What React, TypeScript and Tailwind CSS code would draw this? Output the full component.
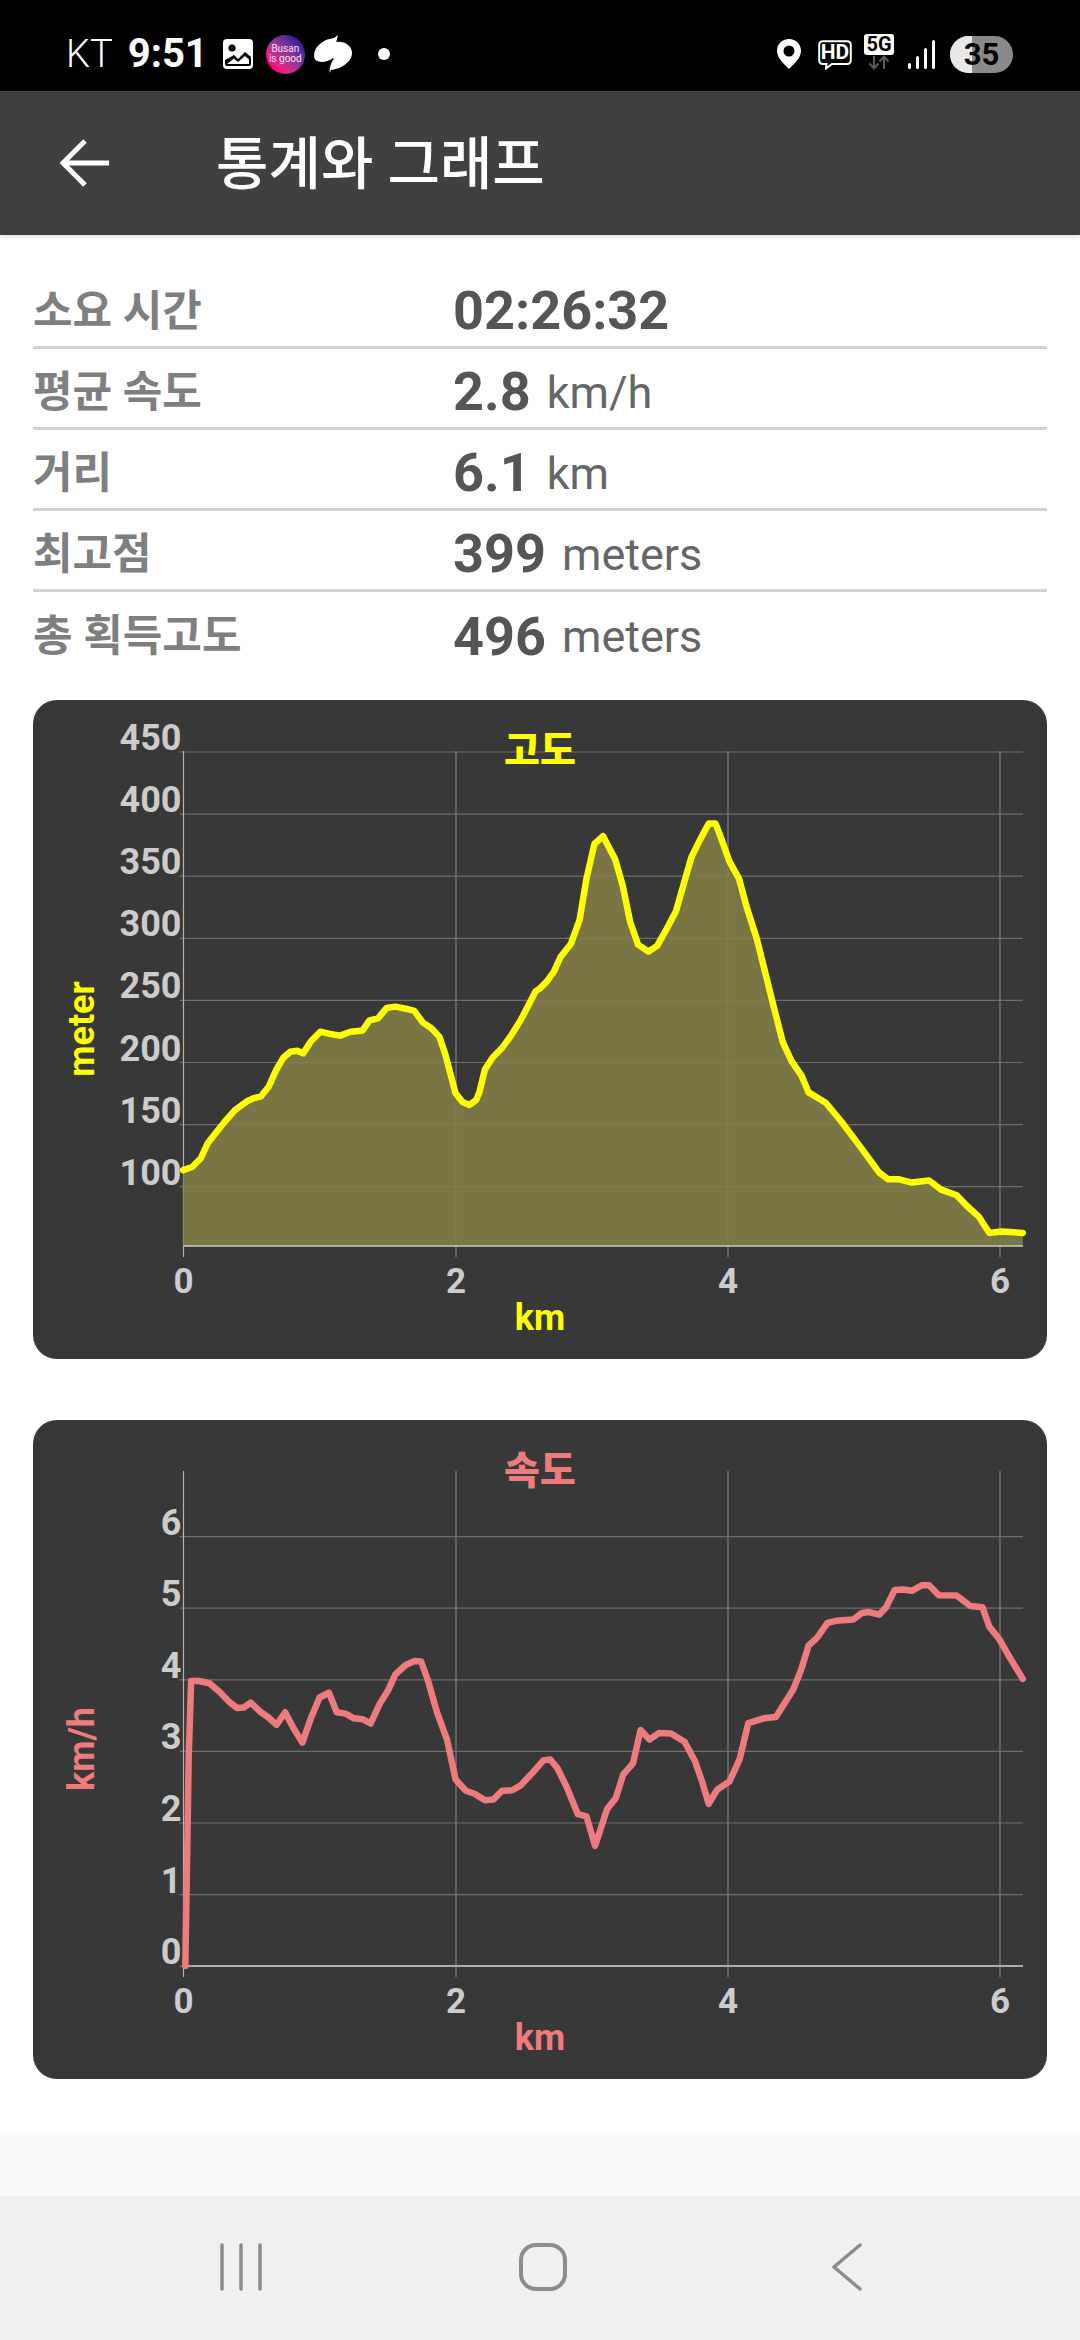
import React from "react";

// points read off the reference, in crop coordinates, split at the middle of the page
const altLeft = [[474,1107],[500,1100],[525,1080],[545,1045],[570,1020],[595,995],[625,968],[660,948],[680,941],[700,937],[722,915],[745,875],[765,848],[785,834],[805,832],[822,838],[845,810],[872,788],[900,793],[930,797],[960,788],[995,785],[1015,762],[1040,757],[1065,733],[1090,730],[1120,735],[1145,740],[1170,767],[1195,780],[1218,800],[1235,840],[1250,885],[1265,930],[1285,950],[1305,957],[1325,945],[1335,925],[1350,875],[1372,848],[1400,825],[1425,798],[1455,760],[1480,722],[1497,695]];
const altRight = [[0,688],[20,672],[40,650],[60,615],[90,585],[115,530],[135,435],[158,355],[183,337],[195,355],[218,390],[240,450],[262,535],[285,587],[315,603],[340,590],[365,555],[395,510],[420,440],[440,385],[465,345],[490,308],[510,308],[525,340],[550,395],[578,435],[600,500],[630,575],[655,655],[680,735],[705,812],[730,855],[760,890],[780,928],[830,952],[875,995],[930,1053],[985,1113],[1010,1128],[1040,1128],[1080,1136],[1130,1131],[1165,1152],[1210,1165],[1240,1190],[1275,1215],[1305,1252],[1340,1249],[1402,1252]];
const speedLeft = [[480,1282],[487,950],[490,800],[497,625],[520,625],[550,630],[580,650],[610,675],[630,687],[650,686],[670,675],[700,697],[720,708],[745,726],[770,697],[795,735],[820,767],[845,710],[870,663],[897,652],[920,697],[945,700],[970,711],[995,713],[1018,723],[1045,677],[1070,645],[1090,610],[1120,588],[1145,579],[1165,580],[1185,625],[1210,695],[1240,760],[1265,852],[1295,878],[1320,885],[1350,900],[1375,898],[1400,878],[1430,877],[1455,865],[1490,835],[1520,808]];
const speedRight = [[30,806],[50,825],[75,865],[110,932],[135,937],[160,1005],[195,920],[220,895],[242,840],[270,815],[292,738],[318,760],[345,745],[380,746],[420,765],[450,810],[470,855],[490,908],[515,875],[550,857],[580,805],[605,722],[650,711],[685,708],[735,645],[758,600],[780,543],[805,525],[835,491],[860,486],[910,483],[935,468],[955,466],[985,472],[1005,455],[1030,415],[1055,414],[1080,417],[1110,404],[1130,404],[1158,427],[1210,428],[1250,452],[1285,455],[1305,500],[1335,530],[1360,565],[1402,620]];

const toCard = (left: number[][], right: number[][]) => [
  ...left.map(([x, y]) => [x / 2.904 - 13, y / 2.306 - 10]),
  ...right.map(([x, y]) => [507 + x / 2.904, y / 2.306 - 10]),
];

const PLOT = { left: 150.5, right: 990, top: 52, bottom: 546 };
const X_TICKS = [
  { label: "0", x: 150.5 },
  { label: "2", x: 423 },
  { label: "4", x: 695 },
  { label: "6", x: 967 },
];

const stats = [
  { label: "소요 시간", value: "02:26:32", unit: "" },
  { label: "평균 속도", value: "2.8", unit: "km/h" },
  { label: "거리", value: "6.1", unit: "km" },
  { label: "최고점", value: "399", unit: "meters" },
  { label: "총 획득고도", value: "496", unit: "meters" },
];

const Chart: React.FC<{
  title: string;
  yLabel: string;
  color: string;
  points: number[][];
  yTicks: { label: string; y: number }[];
  filled?: boolean;
  className?: string;
}> = ({ title, yLabel, color, points, yTicks, filled, className }) => {
  const line = points.map((p) => p[0].toFixed(1) + "," + p[1].toFixed(1)).join(" ");
  const first = points[0];
  const last = points[points.length - 1];
  return (
    <div className={"h-[659px] rounded-[24px] bg-[#383838] overflow-hidden " + (className ?? "")}>
      <svg viewBox="0 0 1014 659" width="1014" height="659" className="block font-bold">
        {yTicks.map((t) => (
          <line key={t.label} x1={PLOT.left - 4} x2={PLOT.right} y1={t.y} y2={t.y} stroke="#6e6e6e" strokeWidth="1.2" />
        ))}
        {X_TICKS.map((t) => (
          <line key={t.label} x1={t.x} x2={t.x} y1={PLOT.top - 1} y2={PLOT.bottom + 11} stroke={t.x === PLOT.left ? "#b4b4b4" : "#808080"} strokeWidth="1.2" />
        ))}
        {filled && (
          <polygon
            points={`${first[0]},${PLOT.bottom} ${line} ${last[0]},${PLOT.bottom}`}
            fill="#827c47"
            fillOpacity="0.9"
          />
        )}
        <line x1={PLOT.left} x2={PLOT.right} y1={PLOT.bottom} y2={PLOT.bottom} stroke="#c8c8c8" strokeWidth="1.4" />
        <polyline points={line} fill="none" stroke={color} strokeWidth="6.5" strokeLinejoin="round" strokeLinecap="round" />
        {yTicks.map((t) => (
          <text key={t.label} x={PLOT.left - 2} y={t.y - 2} textAnchor="end" fontSize="36" fill="#cccccc">
            {t.label}
          </text>
        ))}
        {X_TICKS.map((t) => (
          <text key={t.label} x={t.x} y={593} textAnchor="middle" fontSize="35" fill="#cccccc">
            {t.label}
          </text>
        ))}
        <text x={507} y={64} textAnchor="middle" fontSize="39" fontWeight="900" fill={color}>
          {title}
        </text>
        <text x={507} y={630} textAnchor="middle" fontSize="36" fill={color}>
          km
        </text>
        <text x={0} y={0} textAnchor="middle" fontSize="36" fill={color} transform="translate(61 329) rotate(-90)">
          {yLabel}
        </text>
      </svg>
    </div>
  );
};

const StatusBar = () => (
  <div className="h-[91px] bg-black text-white flex items-center shrink-0 pl-[66px] pr-[67px] pt-[17px]">
    <span className="text-[38px] leading-none font-light">KT</span>
    <span className="text-[40px] leading-none font-bold ml-[15px]">9:51</span>
    <svg width="32" height="32" viewBox="0 0 32 32" className="ml-[14px]">
      <rect x="1" y="1" width="30" height="30" rx="4" fill="#fff" />
      <circle cx="10" cy="10" r="3.6" fill="#000" />
      <path d="M3 26 L3 22 L12 17 L16 21 L23 14 L29 19 L29 26 Q29 28 27 28 L5 28 Q3 28 3 26Z" fill="#000" />
      <path d="M5 26 L12 20.5 L16 24 L23 18 L27 21.5 L27 26Z" fill="#fff" />
    </svg>
    <div className="ml-[12px] w-[39px] h-[39px] rounded-full bg-gradient-to-tr from-[#ff0080] from-20% to-[#43209c] to-80% flex flex-col items-center justify-center text-[#ffe0f6] font-normal text-[10px] leading-[10px]">
      <span>Busan</span>
      <span>is good</span>
    </div>
    <svg width="40" height="38" viewBox="0 0 40 38" className="ml-[8px]">
      <path d="M1 21 C1 11 11 4 21 3 L25 0 C24 3 24 5 23 7 C32 6 39 11 39 18 C39 27 28 34 18 35 L17 38 C16 35 17 32 18 29 C19 26 22 24 20 23 C12 29 1 28 1 21Z" fill="#fff" />
    </svg>
    <div className="ml-[25px] w-[12px] h-[12px] rounded-full bg-white" />
    <div className="flex-1" />
    <svg width="24" height="30" viewBox="0 0 24 30">
      <path fillRule="evenodd" d="M12 0 C19 0 24 5 24 12 C24 19 17 25 12 30 C7 25 0 19 0 12 C0 5 5 0 12 0Z M12 6.5 A5.5 5.5 0 1 0 12 17.5 A5.5 5.5 0 1 0 12 6.5Z" fill="#fff" />
    </svg>
    <div className="relative ml-[17px] w-[34px] h-[29px]">
      <svg width="34" height="30" viewBox="0 0 34 30" className="absolute inset-0">
        <path d="M5 1.2 H29 Q32.8 1.2 32.8 5 V20 Q32.8 24 29 24 H14 L8 28.5 L8.5 24 H5 Q1.2 24 1.2 20 V5 Q1.2 1.2 5 1.2Z" fill="none" stroke="#fff" strokeWidth="2" />
      </svg>
      <span className="absolute inset-x-0 top-[3px] text-center text-[21px] leading-[19px] font-bold">HD</span>
    </div>
    <div className="ml-[12px] w-[30px] h-[37px] flex flex-col items-center self-start mt-[17px]">
      <div className="w-[30px] h-[21px] bg-white rounded-[3px] text-black text-[20px] leading-[21px] font-bold text-center">5G</div>
      <svg width="24" height="15" viewBox="0 0 24 15">
        <path d="M7 1 V13 M2.5 8.5 L7 13.5 L11.5 8.5" fill="none" stroke="#5a5a5a" strokeWidth="2" />
        <path d="M17 14 V2 M12.5 6.5 L17 1.5 L21.5 6.5" fill="none" stroke="#5a5a5a" strokeWidth="2" />
      </svg>
    </div>
    <svg width="27" height="29" viewBox="0 0 27 29" className="ml-[14px]">
      <rect x="0" y="23" width="3" height="6" rx="1.5" fill="#fff" />
      <rect x="8" y="16" width="3" height="13" rx="1.5" fill="#fff" />
      <rect x="16" y="8" width="3" height="21" rx="1.5" fill="#fff" />
      <rect x="24" y="0" width="3" height="29" rx="1.5" fill="#fff" />
    </svg>
    <div className="ml-[15px] w-[63px] h-[37px] rounded-full overflow-hidden flex relative bg-[#8a8a8a]">
      <div className="w-[22px] bg-[#e8e8e8]" />
      <span className="absolute inset-0 text-center text-black text-[31px] leading-[37px] font-bold">35</span>
    </div>
  </div>
);

const Header = () => (
  <div className="h-[144px] bg-[#404040] shadow-[0_2px_4px_rgba(0,0,0,0.12)] flex items-center shrink-0 relative">
    <svg width="50" height="48" viewBox="0 0 50 48" className="ml-[60px]">
      <path d="M49 24 H4 M25 2 L3 24 L25 46" fill="none" stroke="#fff" strokeWidth="5" />
    </svg>
    <h1 className="ml-[106px] pt-[3px] text-white text-[57px] leading-none font-medium">통계와 그래프</h1>
  </div>
);

const NavBar = () => (
  <div className="h-[144px] bg-[#f0f0f3] shrink-0 flex items-start pt-[47px] pl-[220px]">
    <svg width="42" height="48" viewBox="0 0 42 48">
      <path d="M2 2 V46 M21 2 V46 M40 2 V46" stroke="#8c8c8c" strokeWidth="3.5" strokeLinecap="round" />
    </svg>
    <svg width="48" height="48" viewBox="0 0 48 48" className="ml-[257px]">
      <rect x="2" y="2" width="44" height="44" rx="15" fill="none" stroke="#8c8c8c" strokeWidth="4" />
    </svg>
    <svg width="31" height="48" viewBox="0 0 31 48" className="ml-[265px]">
      <path d="M28 2 L2 24 L28 46" fill="none" stroke="#8c8c8c" strokeWidth="3.5" strokeLinecap="round" strokeLinejoin="round" />
    </svg>
  </div>
);

export default function App() {
  const altTicks = ["450", "400", "350", "300", "250", "200", "150", "100"].map((label, i) => ({
    label,
    y: 52 + i * 62.1,
  }));
  const speedTicks = ["6", "5", "4", "3", "2", "1", "0"].map((label, i) => ({
    label,
    y: 116.6 + i * 71.6,
  }));

  return (
    <div className="w-[1080px] h-[2340px] flex flex-col bg-white overflow-hidden [font-family:Roboto,'Noto_Sans_CJK_KR',sans-serif]">
      <StatusBar />
      <Header />
      <main className="flex-1 px-[33px] pt-[33px]">
        <div>
          {stats.map((s, i) => (
            <div
              key={s.label}
              className={
                "h-[81px] pt-[8px] flex items-center border-[#d3d3d3] " +
                (i < stats.length - 1 ? "border-b-[3px]" : "")
              }
            >
              <span className="w-[420px] text-[43px] font-bold text-[#7f7f7f] leading-none">
                {s.label}
              </span>
              <span className="text-[54px] font-bold text-[#555555] leading-none">{s.value}</span>
              {s.unit && <span className="ml-[16px] text-[45px] text-[#666666] leading-none">{s.unit}</span>}
            </div>
          ))}
        </div>
        <Chart
          className="mt-[27px]"
          title="고도"
          yLabel="meter"
          color="#ffff00"
          points={toCard(altLeft, altRight)}
          yTicks={altTicks}
          filled
        />
        <Chart
          className="mt-[61px]"
          title="속도"
          yLabel="km/h"
          color="#ee7b7e"
          points={toCard(speedLeft, speedRight)}
          yTicks={speedTicks}
        />
      </main>
      <div className="h-[63px] bg-[#fafafa] shrink-0" />
      <NavBar />
    </div>
  );
}
